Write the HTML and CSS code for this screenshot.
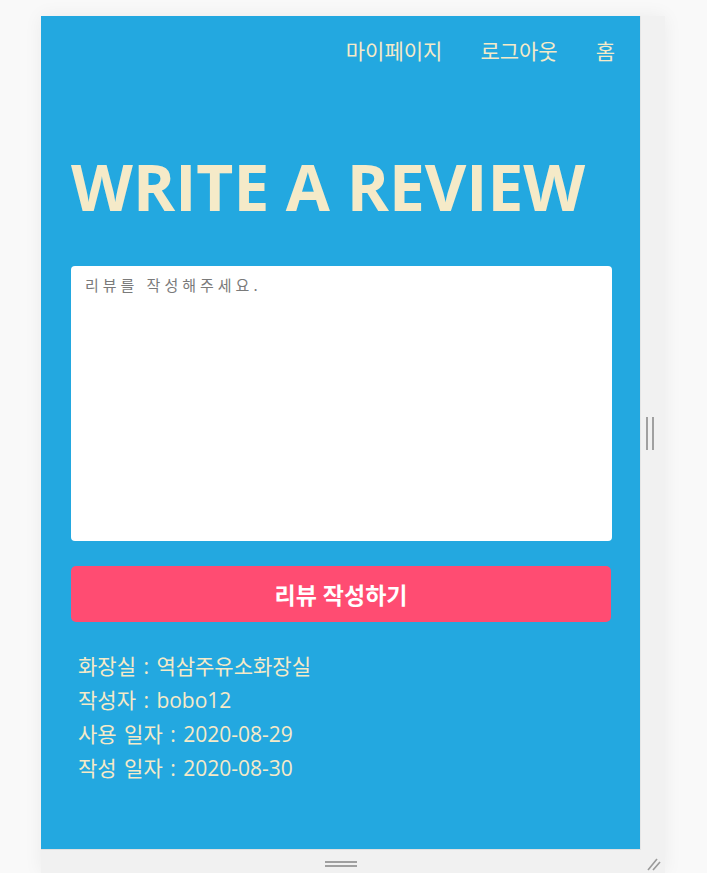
FILE: index.html
```html
<!DOCTYPE html>
<html lang="ko">
<head>
<meta charset="utf-8">
<title>Write a review</title>
<link rel="stylesheet" href="styles.css">
</head>
<body>
<div class="frame">
  <div class="frame-row">
    <main class="screen">
      <nav class="nav">
        <a class="nav-link" href="#">마이페이지</a>
        <a class="nav-link" href="#">로그아웃</a>
        <a class="nav-link" href="#">홈</a>
      </nav>
      <section class="content">
        <h1 class="title">WRITE A REVIEW</h1>
        <textarea class="review-input" placeholder="리뷰를 작성해주세요."></textarea>
        <button class="submit-btn" type="button">리뷰 작성하기</button>
        <ul class="info">
          <li>화장실 : 역삼주유소화장실</li>
          <li>작성자 : bobo12</li>
          <li>사용 일자 : 2020-08-29</li>
          <li>작성 일자 : 2020-08-30</li>
        </ul>
      </section>
    </main>
    <div class="side-handle"><span class="bars-v"></span></div>
  </div>
  <div class="bottom-handle">
    <span class="bars-h"></span>
    <svg class="corner" width="16" height="16" viewBox="0 0 16 16">
      <line x1="2" y1="14" x2="11" y2="3" stroke="#9a9a9a" stroke-width="1.6"/>
      <line x1="7" y1="14" x2="14" y2="6" stroke="#9a9a9a" stroke-width="1.6"/>
    </svg>
  </div>
</div>
</body>
</html>
```
FILE: styles.css
```css
* { box-sizing: border-box; }
html, body {
  margin: 0;
  padding: 0;
  background: #f9f9f9;
}
body {
  font-family: "Open Sans", "Noto Sans CJK KR", sans-serif;
}
.frame {
  margin: 16px 0 0 41px;
  width: 624px;
  box-shadow: 0 0 18px rgba(0, 0, 0, 0.06);
}
.frame-row {
  display: flex;
}
.screen {
  width: 600px;
  height: 834px;
  background: #23a8e0;
  border-right: 1px solid #e6e6e6;
  border-bottom: 1px solid #e0e0e0;
  color: #f5eac8;
}
.side-handle {
  width: 24px;
  background: #f1f1f1;
  display: flex;
  align-items: center;
  justify-content: center;
}
.bars-v {
  display: block;
  width: 8px;
  height: 33px;
  border-left: 2px solid #a0a0a0;
  border-right: 2px solid #a0a0a0;
  margin-left: -6px;
}
.bottom-handle {
  position: relative;
  height: 23px;
  background: #f1f1f1;
  display: flex;
  justify-content: center;
  padding-right: 24px;
}
.bars-h {
  display: block;
  width: 32px;
  height: 6px;
  margin-top: 11px;
  border-top: 2px solid #a0a0a0;
  border-bottom: 2px solid #a0a0a0;
}
.corner {
  position: absolute;
  right: 3px;
  top: 6px;
}
.nav {
  display: flex;
  justify-content: flex-end;
  gap: 38px;
  padding: 20px 25px 0 0;
}
.nav-link {
  color: #f5eac8;
  text-decoration: none;
  font-size: 21px;
  line-height: 30px;
}
.content {
  width: 541px;
  margin: 0 0 0 30px;
}
.title {
  margin: 81px 0 0 0;
  font-family: "Open Sans", "Noto Sans CJK KR", sans-serif;
  font-weight: 700;
  font-size: 64px;
  line-height: 80px;
  color: #f5eac8;
  letter-spacing: 0;
}
.review-input {
  display: block;
  width: 541px;
  height: 275px;
  margin-top: 39px;
  border: none;
  border-radius: 4px;
  background: #fff;
  padding: 8px 14px;
  font-family: "Noto Sans CJK KR", sans-serif;
  font-size: 15px;
  letter-spacing: 4px;
  resize: none;
  outline: none;
}
.review-input::placeholder {
  color: #7a7a7a;
}
.submit-btn {
  display: block;
  width: 540px;
  height: 56px;
  margin-top: 25px;
  border: none;
  border-radius: 5px;
  background: #ff4c72;
  color: #fff;
  font-family: "Open Sans", "Noto Sans CJK KR", sans-serif;
  font-weight: 700;
  font-size: 23px;
}
.info {
  list-style: none;
  margin: 27px 0 0 0;
  padding: 0 0 0 7px;
  font-size: 21px;
  line-height: 34px;
  word-spacing: 2px;
  color: #f5eac8;
}
```
